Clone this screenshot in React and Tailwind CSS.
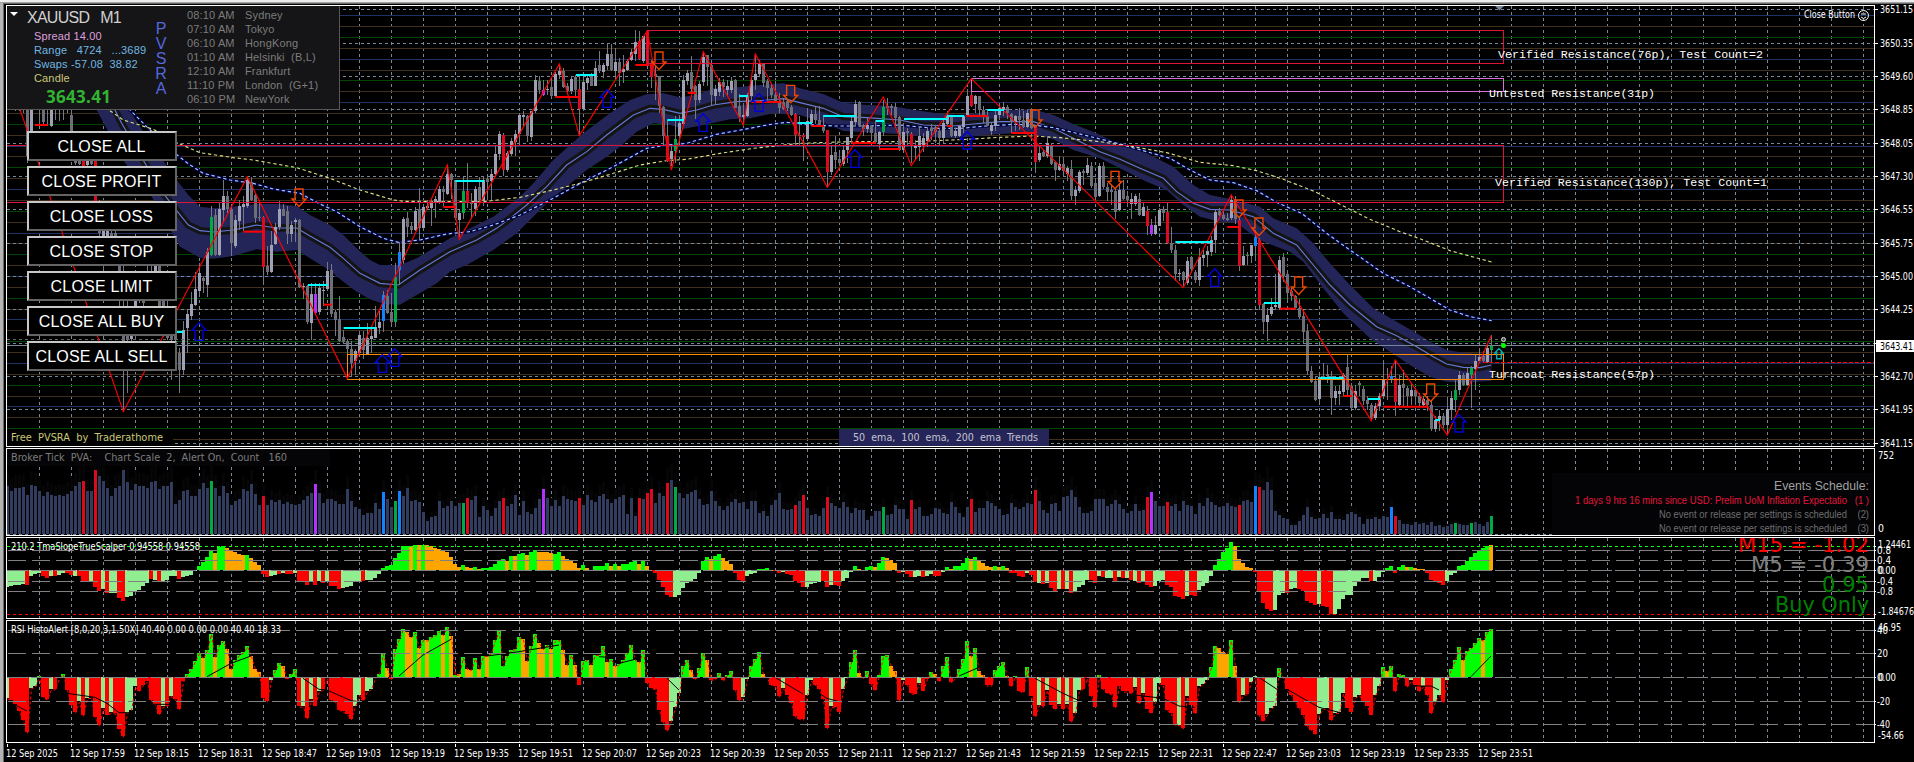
const UI_FONT = "[font-family:'DejaVu_Sans_Condensed','DejaVu_Sans',sans-serif]";
const ARIAL = "[font-family:'Liberation_Sans',Arial,sans-serif]";
const MONO = "[font-family:'Liberation_Mono',monospace]";

// one bar every 4px, first bar at x = 7
const barX = (i) => 7 + i * 4;

const GRID_X = Array.from({ length: 59 }, (_, k) => 7 + k * 32);
const PRICES = [
  [9, "3651.15"], [43, "3650.35"], [76, "3649.60"], [109, "3648.85"], [143, "3648.05"],
  [176, "3647.30"], [209, "3646.55"], [243, "3645.75"], [276, "3645.00"], [309, "3644.25"],
  [343, ""], [376, "3642.70"], [409, "3641.95"], [443, "3641.15"],
];
const PIVOTS = {
  "#1e3264": [15, 59, 102, 146, 189, 233, 276, 319, 363, 406],
  "#3f301e": [26, 48, 70, 91, 113, 135, 156, 178, 200, 222, 243, 265, 287, 309, 330, 352, 374, 396, 417, 439],
  "#004600": [37, 80, 124, 167, 211, 254, 298, 341, 385, 428],
};

const CANDLE_COLORS = {
  u: "#a0a0b4", d: "#6e6e78", g: "#00aa46", r: "#dc0a1e", b: "#1482ff", p: "#b432ff",
};

// "type high top bottom low", thirds of a pixel, starting at the bar index
const CANDLES = [
  [0, "d 200 220 300 330,d 210 240 310 330,d 220 260 320 335,u 230 260 310 335,d 240 290 330 340,d 300 320 470 490,u 280 300 420 425,d 300 310 320 330,d 300 310 328 375,d 300 320 368 380,d 300 320 328 380,u 290 310 378 382,d 300 310 320 360,d 300 310 320 365,d 300 310 320 360,d 300 310 320 340,d 300 345 400 470,d 400 420 490 495,d 450 470 494 495,r 440 450 510 512,u 450 460 495 500,d 450 470 493 495,r 480 485 612 640,d 600 620 700 780,u 650 660 740 812,u 660 690 712 770,d 690 700 710 790,d 690 700 720 770,d 760 780 900 920,d 800 1010 1028 1235,d 900 950 1022 1180,u 920 950 1018 1060,u 860 880 930 1020,d 860 870 900 910,d 880 900 910 920,u 780 790 800 900,u 760 770 780 860,u 750 790 830 890,d 770 790 940 1010,d 890 900 940 1012,d 900 930 1015 1020,d 960 990 1020 1140,d 980 1000 1022 1030"],
  [43, "d 1045 1060 1110 1180,u 965 992 1112 1125,u 930 943 984 1060,u 878 912 948 960,u 818 867 915 920,u 790 819 873 885,d 830 835 845 880,u 745 757 855 893,g 620 651 765 768,d 628 645 767 770,u 610 627 767 768,u 540 588 632 670,d 575 588 628 640,d 620 628 730 768,u 645 660 738 745,u 600 619 665 692,u 590 612 622 695,u 530 542 620 625,d 532 547 600 605,d 580 585 654 670,d 610 652 656 665,r 650 653 803 856,d 740 798 818 826,u 695 735 818 820,u 670 683 733 735,u 605 627 683 690,d 612 628 648 650,d 620 634 704 732,u 665 677 702 728,u 655 662 668 728,d 658 660 862 864,u 850 858 862 898,d 855 858 968 974,u 850 882 970 1022,p 850 882 940 945,u 850 864 936 945,u 845 870 875 918,u 788 815 868 872,d 792 812 944 952,d 930 938 960 1010,d 888 958 1025 1028,d 990 1012 1026 1032,d 1018 1025 1048 1135,d 1025 1047 1090 1132,u 1048 1053 1085 1125,u 998 1007 1060 1062,d 995 1015 1050 1078,u 970 1015 1063 1064,u 985 1010 1018 1060,u 918 982 1014 1015,u 935 967 985 1003,b 875 887 965 998,d 870 888 940 942,d 880 937 968 975,g 790 832 968 982,b 728 757 810 856,u 653 657 782 792"],
  [100, "d 636 655 682 712,d 668 678 692 704,u 622 633 692 695,d 565 628 684 720,u 612 622 684 690,u 600 620 625 632,u 595 608 625 680,u 590 598 608 655,u 558 567 607 612,d 560 568 578 618,u 495 522 582 585,d 520 522 540 598,d 540 542 655 660,u 630 640 660 712,g 532 574 640 658,r 490 573 610 625,d 580 608 614 658,u 560 567 627 650,d 532 562 600 610,u 530 540 605 620,d 528 538 546 600,u 508 523 545 600,u 438 462 522 530,u 393 402 462 482,r 400 405 510 530,u 455 460 510 518,u 415 423 462 470,u 390 402 428 470,u 340 347 402 435,u 333 345 352 378,d 345 348 410 428,u 335 335 412 425,u 225 242 335 340,d 228 243 270 283,p 240 270 287 290,u 240 268 272 287,d 240 262 290 292,u 218 223 290 292,u 192 213 225 238,d 205 213 262 265,d 250 260 275 282,u 230 237 273 282,d 225 232 272 290,r 228 269 328 405,u 232 247 328 335,u 225 235 250 270,d 220 226 258 260,u 185 204 258 260,d 155 197 214 220,u 190 197 218 235"],
  [150, "u 130 162 200 212,d 132 162 210 215,u 145 186 215 240,d 175 186 220 258,u 165 208 218 250,u 178 183 212 215,u 148 157 182 185,u 90 126 162 185,r 95 123 178 180,u 108 110 183 190,r 92 93 195 200,r 180 190 232 266,d 200 222 230 300,d 228 228 320 340,d 320 323 408 440,r 360 408 483 488,u 440 453 478 500,g 350 418 455 490,u 345 370 410 435,u 225 240 372 375,u 210 220 245 255,d 168 218 267 280,d 255 258 302 358,u 245 252 302 310,u 160 173 248 258,d 165 165 202 258,d 190 197 287 318,u 255 268 288 313,u 235 248 278 288,d 238 246 262 292,u 240 258 272 290,u 232 245 272 280,d 238 240 325 325,d 283 320 352 368,u 310 345 353 375,u 280 285 350 352,u 228 240 288 300,u 165 222 240 272,u 182 190 223 230,d 190 193 250 262,d 238 245 265 300,d 250 265 287 295,d 245 285 305 310,d 280 303 325 340,d 295 308 328 332,d 300 305 325 335,d 315 322 345 350,r 340 342 405 438,d 350 405 410 438,r 400 405 412 485"],
  [200, "u 325 365 417 420,u 330 342 370 375,d 318 343 362 372,d 320 360 375 378,d 345 380 395 400,r 390 392 518 560,u 435 467 517 525,d 408 458 480 508,d 460 478 490 498,u 440 452 492 500,u 412 413 452 490,u 345 363 415 432,u 302 312 367 378,d 303 307 378 382,d 372 375 388 408,u 355 375 387 400,d 375 378 400 425,d 362 400 428 430,u 395 397 432 450,g 300 322 398 410,d 295 318 325 345,d 312 318 325 347,d 310 323 355 385,d 350 353 452 455,u 370 398 452 455,d 385 395 400 440,r 398 402 440 490,u 420 440 445 480,u 378 410 443 485,u 400 415 435 457,u 385 393 425 442,d 372 385 395 420,d 375 382 398 430,d 385 395 415 435,u 358 370 415 430,u 335 348 372 375,d 350 350 410 412,u 385 395 410 415,u 375 380 410 413,u 345 350 383 400,u 268 288 345 350,r 240 287 320 322,u 285 288 312 340,d 288 288 332 348,d 318 332 348 370,d 335 348 378 380,u 370 375 393 405,u 335 345 378 395,u 310 325 345 362,u 308 322 330 348"],
  [250, "d 315 323 340 358,d 340 342 368 400,u 345 350 368 395,d 325 350 360 390,d 335 362 382 385,u 330 340 382 385,d 325 328 385 388,r 375 378 488 520,u 440 460 480 488,d 450 457 470 472,u 408 430 470 475,d 430 440 492 495,d 485 487 510 545,u 470 492 510 515,d 475 492 515 530,u 500 505 522 545,d 480 508 590 600,u 558 572 590 617,u 510 517 575 580,d 508 513 520 555,u 475 495 520 525,d 488 500 558 565,d 535 550 592 600,u 490 498 590 592,d 487 500 562 568,d 550 562 578 605,d 560 570 578 617,d 565 575 637 658,u 550 570 630 635,d 540 570 598 602,d 575 590 600 620,u 580 598 612 658,u 582 590 612 618,d 580 597 645 648,u 610 622 648 650,r 620 633 680 705,p 658 677 702 708,u 650 675 702 705,u 625 630 678 680,d 620 628 640 665,r 610 636 730 732,d 683 730 750 760,d 735 750 823 845,u 808 820 823 845,d 815 818 842 860,u 773 783 850 855,d 770 772 808 820,d 812 818 842 850,u 745 773 842 860,u 750 765 775 800"],
  [300, "u 740 755 765 802,u 710 720 758 770,u 632 638 722 760,d 625 635 645 650,d 635 645 658 662,d 640 655 662 665,u 585 600 655 662,d 590 605 658 672,r 655 660 798 815,u 740 768 797 800,d 758 767 770 795,u 735 735 770 790,b 690 713 738 780,r 715 722 915 930,d 910 912 968 1002,u 925 945 968 1025,u 895 922 943 950,u 822 917 923 932,u 770 780 925 930,d 760 772 828 848,d 810 822 880 905,d 865 875 890 905,d 885 888 925 930,d 898 925 952 958,d 930 950 997 1030,d 972 995 1115 1125,d 1100 1113 1146 1150,d 1130 1145 1200 1204,u 1120 1133 1198 1210,d 1090 1130 1136 1140,d 1095 1123 1130 1150,d 1115 1130 1196 1245,u 1160 1175 1196 1215,u 1155 1175 1182 1215,u 1120 1125 1178 1190,d 1062 1102 1170 1190,d 1150 1158 1224 1228,u 1155 1175 1224 1230,d 1145 1150 1155 1190,d 1160 1167 1205 1215,d 1190 1200 1212 1230,d 1210 1215 1255 1260,u 1210 1220 1255 1262,u 1180 1190 1220 1235,u 1080 1140 1190 1195,u 1105 1137 1140 1200,b 1100 1130 1138 1150,r 1085 1134 1208 1250,u 1125 1155 1215 1220,d 1110 1152 1165 1220"],
  [350, "d 1158 1165 1190 1220,u 1150 1172 1190 1215,d 1165 1170 1190 1215,d 1180 1190 1210 1220,u 1190 1198 1215 1218,d 1190 1200 1215 1235,d 1205 1215 1288 1295,u 1250 1260 1288 1298,u 1230 1250 1262 1295,d 1240 1250 1275 1285,u 1195 1228 1275 1300,u 1175 1195 1230 1260,g 1140 1170 1202 1238,u 1115 1125 1172 1185,d 1120 1125 1155 1160,u 1105 1120 1155 1160,g 1100 1105 1125 1225,u 1065 1085 1108 1170,u 1045 1072 1085 1087,d 1055 1070 1085 1090,u 1040 1045 1088 1090,g 1005 1035 1050 1090"],
].flatMap(([start, rows]) =>
  rows.split(",").map((row, k) => {
    const [type, ...values] = row.split(" ");
    return [start + k, type, ...values.map((v) => Math.floor(Number(v) / 3))];
  })
);

const ZIGZAG =
  "60,328 370,1235 742,530 1042,1135 1342,495 1378,718 1678,192 1738,407 1942,92 2014,510 2110,155 2230,375 2266,162 2482,562 2650,291 2734,497 2914,236 3550,863 3694,585 4114,1262 4186,1080 4342,1305 4474,1006";

const BAND_TOP =
  "290,200 350,270 440,410 530,540 565,585 600,620 640,625 700,620 770,612 830,612 890,618 930,645 990,675 1030,705 1070,745 1110,780 1140,795 1200,795 1250,775 1350,715 1400,690 1480,650 1560,590 1600,550 1660,480 1750,400 1830,340 1890,300 1940,283 1990,280 2040,292 2090,285 2140,265 2210,262 2280,255 2350,250 2400,265 2470,282 2530,308 2600,315 2680,318 2730,328 2800,338 2870,345 2930,340 2990,332 3100,328 3160,345 3220,372 3290,400 3340,425 3440,460 3520,500 3580,555 3630,585 3690,597 3780,620 3820,655 3890,685 3940,730 3990,790 4050,855 4120,925 4190,965 4250,1000 4290,1025 4340,1050 4390,1058 4474,1063";
const BAND_BOTTOM =
  "4474,1142 4390,1148 4340,1145 4290,1130 4230,1095 4170,1055 4110,1015 4030,940 3970,865 3910,785 3870,755 3790,725 3750,700 3710,668 3660,665 3600,650 3550,615 3500,570 3440,545 3360,505 3300,475 3220,450 3160,418 3100,402 3040,400 2960,405 2860,415 2780,410 2700,402 2620,398 2530,393 2470,368 2400,345 2320,340 2250,355 2190,358 2110,375 2050,387 2010,375 1960,370 1910,395 1860,440 1820,470 1760,510 1700,560 1650,600 1600,650 1550,700 1480,750 1400,795 1350,815 1310,850 1250,885 1200,914 1150,912 1110,898 1070,875 1030,845 990,812 930,775 890,750 830,755 770,748 700,768 640,776 600,773 540,740 455,590 375,488 290,330";
const BAND_MID =
  "340,320 365,370 435,490 490,580 530,632 565,675 600,692 640,696 700,690 770,675 830,684 890,684 930,708 990,742 1030,775 1080,820 1140,850 1195,855 1260,810 1350,755 1430,720 1490,685 1530,655 1580,615 1640,560 1700,495 1760,455 1820,405 1900,345 1950,325 1990,328 2040,340 2090,330 2140,315 2210,305 2280,302 2350,296 2400,308 2470,325 2530,350 2600,353 2700,360 2770,375 2860,378 2920,372 3000,365 3100,365 3160,385 3220,415 3300,455 3360,478 3420,505 3490,535 3530,575 3580,610 3630,628 3690,630 3760,650 3820,700 3890,735 3940,795 3990,855 4050,915 4130,980 4190,1007 4250,1040 4300,1070 4340,1092 4390,1102 4440,1103 4474,1095";
const EMA_BLUE =
  "385,325 440,380 535,468 570,495 610,520 690,540 760,550 820,567 900,580 960,612 1010,635 1080,680 1150,715 1195,727 1260,720 1340,702 1410,695 1480,675 1560,645 1650,600 1750,545 1840,500 1940,445 2000,435 2060,430 2150,403 2250,385 2300,375 2360,367 2400,372 2500,378 2600,378 2700,375 2800,385 2880,385 2960,378 3040,373 3100,375 3160,383 3260,407 3360,432 3440,455 3510,475 3570,510 3630,540 3700,548 3770,572 3830,607 3905,640 3980,700 4050,750 4150,820 4230,860 4290,895 4350,930 4410,950 4475,962";
const EMA_YELLOW =
  "330,332 370,360 460,388 535,430 600,458 700,473 760,480 890,503 990,535 1080,570 1180,600 1215,604 1450,605 1560,592 1660,570 1750,547 1840,520 1920,495 2000,482 2060,478 2160,460 2260,445 2400,430 2550,425 2730,425 2900,418 3000,412 3100,408 3180,413 3300,425 3400,440 3500,458 3600,487 3700,497 3770,512 3850,538 3945,575 4030,618 4110,658 4200,695 4270,720 4350,752 4420,771 4475,786";

const HIGHS = [
  [530, 550, 996], [924, 983, 855], [1031, 1127, 984], [1366, 1452, 543], [1728, 1788, 225], [2002, 2052, 360],
  [2218, 2244, 288], [2392, 2436, 369], [2470, 2567, 348], [2628, 2652, 363], [2712, 2842, 357], [2842, 2892, 348],
  [2962, 3012, 330], [3526, 3636, 726], [3792, 3840, 909], [3958, 4030, 1134], [4104, 4140, 1197], [4306, 4320, 1260],
];
const LOWS = [
  [105, 143, 375], [730, 790, 695], [970, 995, 914], [1330, 1368, 621], [1666, 1738, 291], [1906, 1948, 195],
  [2063, 2088, 279], [2254, 2340, 306], [2434, 2472, 378], [2555, 2628, 429], [2637, 2700, 447], [2842, 2856, 378],
  [2900, 2964, 348], [3034, 3105, 399], [3682, 3718, 681], [3840, 3888, 926], [4030, 4056, 1188], [4150, 4284, 1220],
];
const SELL_ARROWS = [
  [897, 565], [1977, 154], [2372, 254], [3105, 328], [3345, 512], [3717, 598], [3777, 652], [3896, 829], [4292, 1150],
];
const BUY_ARROWS = [
  [597, 967], [1147, 1063], [1184, 1045], [1821, 268], [2109, 340], [2277, 280], [2565, 448], [2902, 393], [3644, 805], [4377, 1242],
];

const parseBars = (text) =>
  text.trim().split(/\s+/).map((token) => {
    const type = /[a-z]/.test(token[0]) ? token[0] : "n";
    return [type, Number(token.replace(/[a-z]/, ""))];
  });

const VOLUME = parseBars(`
170 183 174 174 173 195 165 168 183 198 188 195 198 195 198 192 183 170 157 r153 183 183 r120 138 155 174 198 174 170 120
157 180 163 170 170 174 157 155 177 170 168 157 222 210 183 180 198 198 177 160 174 g153 174 200 170 190 225 213 207 177
183 163 192 225 r198 225 210 216 210 222 216 222 225 222 210 200 189 p162 189 219 207 207 213 222 222 177 213 231 237 255
249 249 219 237 b186 207 231 g213 b183 198 174 213 210 216 246 273 261 258 213 234 228 213 228 219 g219 r204 210 198 261 228
240 258 234 213 r204 228 222 195 255 213 246 252 234 207 p177 204 228 210 228 198 207 210 213 r204 225 195 210 216 198 192
207 219 207 201 195 252 204 260 r204 207 r189 r177 219 189 200 r159 150 g171 189 204 192 186 180 207 225 222 183 213 228 240
228 216 207 219 216 237 213 213 249 243 258 225 210 189 237 240 237 r225 213 r195 234 255 252 258 234 r201 219 228 234 216
231 249 234 240 240 270 258 243 243 g231 255 252 225 237 237 267 r210 237 231 258 258 252 234 237 249 252 216 231 249 261
231 r207 246 234 234 213 219 228 237 255 252 219 231 237 231 219 222 r180 213 240 249 222 219 243 201 198 180 201 231 249
249 243 207 207 207 228 222 210 222 237 249 243 222 243 240 r201 p186 213 228 228 r216 228 222 243 213 225 228 252 219 228
204 216 225 231 228 219 228 231 r225 213 210 216 b168 r171 180 156 180 243 255 264 267 285 285 273 255 231 261 267 264 252
264 246 267 267 270 252 246 252 261 282 267 267 261 267 258 261 b231 r258 270 282 282 285 276 282 279 285 276 288 285 291
288 282 g279 282 285 285 g279 276 282 288 276 g258`);

const SLOPE = parseBars(`
l473 l470 l467 l465 l462 r467 l440 l432 l430 r440 r446 l440 r440 l435 l430 r430 r435 l440 r440 r454 r454 l454 r472 r483 l478 r490 l490 l490 r505 r515
l503 l500 l488 l480 l470 l460 r448 l450 r458 l453 l450 l440 l440 r448 l443 l440 l437 l422 g408 g398 g381 g363 o371 g352 g348 o354 o365 o368 o372 o377
g375 o384 o398 o405 r432 r443 l438 l436 r434 l430 r432 r434 l430 r454 r454 r466 l455 r465 l455 r459 l455 r470 r470 r477 l474 l472 l470 l458 l455 r453
l452 l450 l445 l434 g415 g408 g405 g384 g369 g350 g348 o350 g346 o347 g346 o347 o350 o356 o359 o365 o368 o381 o403 o411 g405 o411 o415 g411 o418 g414
g414 g411 g402 g390 g387 o393 g378 o378 g372 g370 o376 g368 g360 o366 o366 o368 o371 g372 g366 o378 o387 o390 o400 o414 g405 o414 o420 g408 g408 g408
g400 o408 g403 o408 g402 g402 g398 g392 o403 g393 o408 r423 r430 r450 r472 r497 r503 l503 l497 l475 l460 l456 l448 l430 g393 g381 o387 g378 g372 o384
o394 o403 r430 r450 r455 l440 l433 l430 g417 g417 g414 o420 r425 r430 l428 r432 r435 r453 r460 r472 l472 l462 l461 l456 r454 r472 l465 r467 r470 l455
l444 l428 g408 o417 l422 g411 g409 o411 g399 g381 o384 o390 o400 r431 l428 r434 r443 l441 l438 r443 l438 l434 r438 r440 l428 g411 o417 g409 g408 g400
g384 o387 g381 o393 o400 o408 o411 g408 o411 g408 o414 r430 r430 r440 r443 l431 r436 r458 l459 r462 l460 r476 r484 l477 r477 l477 r490 l488 l472 l465
l450 r450 r461 l438 r443 l444 l444 r458 l443 r446 l444 r450 l455 r460 l455 r466 r472 l470 l455 l452 r467 r472 r500 r503 r509 l500 r497 r500 l480 l470
l461 l440 g405 g387 g366 g356 g337 o348 o387 o400 o411 o414 r426 r485 r521 r537 r543 l540 l495 l490 r490 l477 l475 r477 r485 r513 r520 r527 l522 r530
r533 r552 l552 l537 l508 l497 l495 l470 l453 l444 l444 r453 l453 l443 l428 g415 g408 r429 g411 g405 o411 g411 o415 o417 o417 r430 r452 r458 r461 r465
l455 l437 l431 g408 g405 g393 g381 g370 g362 g355 g348 o347`);

const RSI = parseBars(`
l805 r810 r823 r843 r872 r908 l775 l770 g738 r803 r808 l778 r778 l745 g733 r780 r825 r848 l815 r857 l805 r803 r862 r887 l835 r855 l848 r850 r898 r920
l850 l840 l770 r783 r765 r755 r812 r825 r853 l830 r828 l798 r808 r837 r755 g733 g718 g693 g670 o685 g660 g612 o683 g645 g633 o658 o717 g692 g675 g668
g650 o678 o717 o727 r805 r815 l752 g720 g700 o710 r748 g733 g718 r830 l830 r865 l808 r828 l783 r780 r745 r810 r815 r840 r845 r853 r867 l830 l795 r812
l785 l778 l745 g733 g672 o715 r747 g657 g627 g597 o608 o622 g608 o655 g630 o632 g622 g617 g605 o615 g592 o618 g735 o733 g683 o717 o720 g685 o718 g678
o678 g670 g630 g605 g708 g678 g660 g658 g622 o628 o693 g650 g613 o640 o657 g645 o657 g632 g630 o660 o705 g675 o705 r765 g695 g690 o705 g675 g675 g650
o697 g687 o710 g703 g690 g670 g645 g690 o697 g660 r760 r775 r777 r840 r878 r902 l873 l833 l790 g708 g690 o722 r747 g715 g670 o690 r750 r748 g730 r752
g735 g725 r780 r812 l803 l748 g708 g687 g668 o733 l745 r765 r770 r800 l775 r795 r820 r860 r867 r869 l795 l752 r765 r777 r808 r895 l830 r833 r848 l778
l745 g697 g660 o730 r745 g725 r763 r782 g735 g680 g677 o708 o725 r812 l752 r765 r790 r793 l760 r783 r747 g727 o733 r753 g708 g683 r757 r745 g718 g688
g635 o680 g655 o725 o735 r767 r767 g722 g708 g697 o738 r770 g738 r783 r787 g712 r800 r860 l825 r830 l780 r826 r837 l823 r837 l823 r875 l850 l780 r777
r745 r800 r832 g735 r778 r790 r792 r832 r768 r785 r785 r790 l772 r820 l790 r838 r850 l817 l760 r765 r840 r850 r885 l885 r895 l800 r825 r850 l770 l762
l750 g712 g648 o655 o668 o672 g632 o708 r817 l795 r793 l757 l740 r857 r875 l853 l835 l828 g715 r745 r778 r795 r815 r835 r855 r888 r900 r913 l853 l837
l835 r870 l850 l848 l790 r835 r848 l803 l795 r815 r828 r857 l797 l770 g712 o725 g708 r785 g733 g737 r770 l752 r765 r783 l770 r795 r850 l815 l795 r818
l752 g718 g690 g652 o690 g663 g655 g640 g625 o632 g607 g598`);

const RSI_SIGNAL = [
  [[2, 825], [5, 843]],
  [[15, 790], [22, 802], [25, 820], [28, 848], [31, 848]],
  [[36, 823], [42, 823]],
  [[50, 740], [56, 700], [61, 678]],
  [[74, 745], [78, 778], [80, 780], [86, 812], [88, 815]],
  [[98, 738], [104, 675], [111, 628]],
  [[120, 678], [128, 665], [138, 645]],
  [[148, 680], [152, 683]],
  [[153, 700], [157, 688]],
  [[165, 745], [168, 780]],
  [[192, 742], [199, 792]],
  [[203, 790], [205, 805], [208, 815]],
  [[238, 738], [243, 712]],
  [[257, 745], [264, 790], [268, 812]],
  [[282, 795], [289, 805], [293, 828], [297, 832]],
  [[313, 742], [318, 782]],
  [[320, 778], [328, 832], [333, 847]],
  [[352, 768], [356, 768], [358, 780]],
  [[366, 740], [371, 678]],
];

const VOLUME_COLORS = { n: "#323c5f", r: "#dc0a1e", g: "#00aa46", b: "#1482ff", p: "#b432ff" };
const HISTO_COLORS = { g: "#00ff00", o: "#ffa500", r: "#ff0000", l: "#90ee90" };

const TIMES = [
  "12 Sep 2025", "12 Sep 17:59", "12 Sep 18:15", "12 Sep 18:31", "12 Sep 18:47", "12 Sep 19:03", "12 Sep 19:19",
  "12 Sep 19:35", "12 Sep 19:51", "12 Sep 20:07", "12 Sep 20:23", "12 Sep 20:39", "12 Sep 20:55", "12 Sep 21:11",
  "12 Sep 21:27", "12 Sep 21:43", "12 Sep 21:59", "12 Sep 22:15", "12 Sep 22:31", "12 Sep 22:47", "12 Sep 23:03",
  "12 Sep 23:19", "12 Sep 23:35", "12 Sep 23:51",
];

const SESSIONS = [
  ["08:10 AM", "Sydney"], ["07:10 AM", "Tokyo"], ["06:10 AM", "HongKong"], ["01:10 AM", "Helsinki  (B,L)"],
  ["12:10 AM", "Frankfurt"], ["11:10 PM", "London  (G+1)"], ["06:10 PM", "NewYork"],
];

const CLOSE_ACTIONS = [
  "CLOSE ALL", "CLOSE PROFIT", "CLOSE LOSS", "CLOSE STOP", "CLOSE LIMIT", "CLOSE ALL BUY", "CLOSE ALL SELL",
];

const Label = ({ x, y, w, size = 11, fill = "#fff", font = UI_FONT, children }) => (
  <text
    x={x}
    y={y}
    textLength={w}
    lengthAdjust="spacingAndGlyphs"
    fontSize={size}
    fill={fill}
    className={`whitespace-pre ${font}`}
  >
    {children}
  </text>
);

const HLine = ({ y, x1 = 7, x2 = 1874, color, dash, width = 1 }) => (
  <line
    x1={x1}
    x2={x2}
    y1={y + 0.5}
    y2={y + 0.5}
    stroke={color}
    strokeWidth={width}
    strokeDasharray={dash}
    shapeRendering="crispEdges"
  />
);

const VerticalGrid = ({ top, bottom }) => (
  <g stroke="#778899" strokeDasharray="3 3" shapeRendering="crispEdges">
    {GRID_X.slice(1).map((x) => (
      <line key={x} x1={x + 0.5} x2={x + 0.5} y1={top} y2={bottom} />
    ))}
  </g>
);

// Chart area with its white frame, and the value scale right of it
const Panel = ({ top, height, scale, overlay, children }) => (
  <div className="flex">
    <div className="relative border border-white">
      <svg
        width="1867"
        height={height}
        viewBox={`7 ${top} 1867 ${height}`}
        className="block overflow-hidden"
      >
        {children}
      </svg>
      {overlay}
    </div>
    <svg
      width="39"
      height={height + 2}
      viewBox={`1875 ${top - 1} 39 ${height + 2}`}
      className="block overflow-visible"
    >
      {scale}
    </svg>
  </div>
);

const Histogram = ({ bars, zero, base }) => (
  <g shapeRendering="crispEdges">
    {bars.map(([type, value], i) => {
      const y = 430 + Math.floor(value / 3);
      const height = Math.max(1, Math.abs(y - zero));
      return (
        <rect
          key={i}
          x={barX(i) - (base ? 1 : 2)}
          y={Math.min(y, zero)}
          width={base ? 3 : 4}
          height={height}
          fill={base ? VOLUME_COLORS[type] : HISTO_COLORS[type]}
        />
      );
    })}
  </g>
);

const Arrow = ({ x, y, down, color, size = 1 }) => (
  <path
    d="M0 1.5 L21 24 L12 24 L12 54 L-12 54 L-12 24 L-21 24 Z"
    transform={down ? `translate(${x} ${y + 56}) scale(1 -1)` : `translate(${x} ${y}) scale(${size})`}
    fill="none"
    stroke={color}
    strokeWidth={4.2 / size}
  />
);

const InfoCard = () => (
  <div
    className={`absolute left-0 top-0 flex h-[104px] w-[333px] border-r border-b border-[#5c5555] bg-[#151517] ${ARIAL}`}
  >
    <div className="w-[140px] pl-[20px]">
      <div className="whitespace-pre pt-px text-[16px] leading-[22px] tracking-[-0.75px] text-[#d0d0d0]">{"XAUUSD   M1"}</div>
      <div className="whitespace-pre pl-[7px] text-[11px] leading-[14px] tracking-[0.15px]">
        <div className="text-[#dda0dd]">Spread 14.00</div>
        <div className="text-[#6fb5e0]">{"Range   4724   ...3689"}</div>
        <div className="text-[#6fb5e0]">{"Swaps -57.08  38.82"}</div>
        <div className="text-[#c8c878]">Candle</div>
      </div>
      <div className="pl-[19px] pt-px text-[17px] font-bold leading-[22px] tracking-[0.3px] text-[#32b432] [font-family:'Open_Sans',sans-serif]">
        3643.41
      </div>
    </div>
    <div className="w-[40px] pl-[8px] pt-[15px] text-center text-[16px] leading-[15px] text-[#5468dc]">
      {["P", "V", "S", "R", "A"].map((letter) => (
        <div key={letter} className="w-[12px]">{letter}</div>
      ))}
    </div>
    <div className="pt-[2px] text-[11px] leading-[14px] tracking-[0.15px] text-[#7c7c7c]">
      {SESSIONS.map(([time, city]) => (
        <div key={city} className="flex whitespace-pre">
          <span className="w-[58px]">{time}</span>
          <span>{city}</span>
        </div>
      ))}
    </div>
    <span className="absolute left-[3px] top-[6px] h-0 w-0 border-x-[4px] border-t-[4px] border-x-transparent border-t-white" />
  </div>
);

const CloseButtons = () => (
  <div className="absolute left-[20px] top-[125px] flex flex-col gap-[5px]">
    {CLOSE_ACTIONS.map((label) => (
      <button
        key={label}
        className={`h-[30px] w-[150px] border-2 border-t-[#c8c8c8] border-r-[#646464] border-b-[#646464] border-l-[#c8c8c8] bg-black pt-px pr-px text-[16px] leading-[26px] tracking-[0.2px] text-white ${ARIAL}`}
      >
        {label}
      </button>
    ))}
  </div>
);

const PriceChart = () => (
  <Panel
    top={6}
    height={440}
    overlay={
      <>
        <InfoCard />
        <CloseButtons />
      </>
    }
    scale={
      <>
        {PRICES.map(([y, label]) => (
          <g key={y}>
            <HLine y={y} x1={1875} x2={1878} color="#fff" />
            {label && <Label x={1880} y={y + 4} w={33}>{label}</Label>}
          </g>
        ))}
        <rect x="1876" y="340" width="38" height="12" fill="#fff" />
        <Label x={1880} y={350} w={33} fill="#000">3643.41</Label>
      </>
    }
  >
    <VerticalGrid top={6} bottom={446} />
    {Object.entries(PIVOTS).map(([color, ys]) => ys.map((y) => <HLine key={y} y={y} color={color} />))}
    {PRICES.map(([y]) => (
      <HLine key={y} y={y} color="#778899" dash="3 3" />
    ))}

    <g transform="scale(0.33333)" fill="none">
      <polygon points={`${BAND_TOP} ${BAND_BOTTOM}`} fill="#232559" />
      <polyline points={BAND_MID} stroke="#141414" strokeWidth="22" />
      <polyline points={BAND_MID} stroke="#6478dc" strokeWidth="3.4" />
      <polyline points={EMA_BLUE} stroke="#00003c" strokeWidth="9" />
      <polyline points={EMA_BLUE} stroke="#a0c8ff" strokeWidth="3.6" strokeDasharray="10 8" />
      <polyline points={EMA_YELLOW} stroke="#dcdc82" strokeWidth="3.4" strokeDasharray="10 8" />
    </g>

    <g shapeRendering="crispEdges">
      {CANDLES.map(([i, type, high, top, bottom, low]) => (
        <g key={i}>
          <rect x={barX(i)} y={high} width="1" height={Math.max(1, low - high)} fill="#787882" />
          <rect x={barX(i) - 1} y={top} width="3" height={Math.max(1, bottom - top)} fill={CANDLE_COLORS[type]} />
        </g>
      ))}
    </g>

    <g fill="none" strokeWidth="1" shapeRendering="crispEdges">
      <path d="M647.5 30.5H1503.5V63.5H647.5Z" stroke="#dc143c" />
      <path d="M6 145.5H1503.5V202.5H6" stroke="#dc143c" />
      <path d="M971.5 78.5H1503.5V91.5H971.5Z" stroke="#da70d6" />
      <path d="M347.5 354.5H1503.5V379.5H347.5Z" stroke="#ff8c00" />
    </g>
    <HLine y={339} x2={1500} color="#696969" dash="3 3" />
    <HLine y={345} color="#778899" />
    <HLine y={362} x1={1483} color="#ff0000" dash="4 2" />

    <g transform="scale(0.33333)" fill="none">
      <polyline points={ZIGZAG} stroke="#ff0000" strokeWidth="3.4" />
      {HIGHS.map(([x1, x2, y]) => (
        <line key={x1} x1={x1} x2={x2} y1={y} y2={y} stroke="#00ffff" strokeWidth="6" />
      ))}
      {LOWS.map(([x1, x2, y]) => (
        <line key={x1} x1={x1} x2={x2} y1={y} y2={y} stroke="#ff0000" strokeWidth="6" />
      ))}
      {SELL_ARROWS.map(([x, y]) => (
        <Arrow key={x} x={x} y={y} down color="#f04600" />
      ))}
      {BUY_ARROWS.map(([x, y]) => (
        <Arrow key={x} x={x} y={y} color="#0000dc" />
      ))}
      <Arrow x={4497} y={1045} color="#00b4b4" size={0.58} />
    </g>
    <circle cx="1503.5" cy="339.5" r="2" fill="#555" stroke="#ddd" />
    <circle cx="1503.5" cy="345.5" r="2.5" fill="#00ff00" />
    <path d="M1495 6H1504L1499.5 10.5Z" fill="#778899" />

    <Label x={1804} y={18} w={51}>Close Button</Label>
    <g fill="none" stroke="#fff">
      <circle cx="1863.5" cy="15.5" r="5" />
      <path d="M1861 17Q1863.5 20 1866 17M1862 13v2M1865 13v2" />
    </g>
    <Label x={1498} y={58} w={265} size={11.6} font={MONO}>Verified Resistance(76p), Test Count=2</Label>
    <Label x={1489} y={97} w={166} size={11.6} font={MONO}>Untested Resistance(31p)</Label>
    <Label x={1495} y={186} w={272} size={11.6} font={MONO}>Verified Resistance(130p), Test Count=1</Label>
    <Label x={1489} y={378} w={166} size={11.6} font={MONO}>Turncoat Resistance(57p)</Label>

    <rect x="7" y="431" width="166" height="15" fill="#020202" />
    <Label x={11} y={441} w={152} size={11} fill="#c8c878">{"Free  PVSRA  by  Traderathome"}</Label>
    <rect x="839" y="429" width="210" height="17" fill="#25255a" />
    <Label x={853} y={441} w={185} size={11} fill="#c3c3cd">{"50  ema,  100  ema,  200  ema  Trends"}</Label>
  </Panel>
);

const VolumeChart = () => (
  <Panel
    top={449}
    height={86}
    scale={
      <>
        <Label x={1878} y={459} w={16}>752</Label>
        <Label x={1878} y={532} w={6}>0</Label>
      </>
    }
  >
    <VerticalGrid top={449} bottom={535} />
    <HLine y={534} color="#778899" dash="3 3" />
    <g shapeRendering="crispEdges">
      {VOLUME.map(([, value], i) => {
        const height = (312 - value) * 0.43;
        return <rect key={i} x={barX(i) - 1} y={534 - height} width="3" height={height} fill="#060608" />;
      })}
    </g>
    <Histogram bars={VOLUME} zero={534} base />
    <rect x="7" y="449" width="323" height="17" fill="#050507" />
    <Label x={11} y={461} w={276} size={11} fill="#7d7d7d">
      {"Broker Tick  PVA:    Chart Scale  2,  Alert On,  Count   160"}
    </Label>
    <rect x="1552" y="473" width="322" height="62" fill="#040406" />
    <Label x={1774} y={490} w={95} size={12} fill="#a0a0a0" font={ARIAL}>Events Schedule:</Label>
    <Label x={1575} y={504} w={294} size={10} fill="#e6143c" font={ARIAL}>
      {"1 days 9 hrs 16 mins since USD: Prelim UoM Inflation Expectatio   (1 )"}
    </Label>
    <Label x={1659} y={518} w={210} size={10} fill="#6e6e6e" font={ARIAL}>
      {"No event or release per settings is scheduled    (2)"}
    </Label>
    <Label x={1659} y={532} w={210} size={10} fill="#6e6e6e" font={ARIAL}>
      {"No event or release per settings is scheduled    (3)"}
    </Label>
  </Panel>
);

const SlopeChart = () => (
  <Panel
    top={538}
    height={80}
    scale={
      <>
        <Label x={1878} y={548} w={33}>1.24461</Label>
        <Label x={1877} y={554} w={14}>0.8</Label>
        <Label x={1877} y={564} w={14}>0.4</Label>
        <Label x={1877} y={574} w={19}>0.00</Label>
        <Label x={1878} y={574} w={6}>0</Label>
        <Label x={1877} y={585} w={16}>-0.4</Label>
        <Label x={1877} y={595} w={16}>-0.8</Label>
        <Label x={1878} y={615} w={36}>-1.84676</Label>
        {[546, 550, 560, 570, 581, 591, 614].map((y) => (
          <HLine key={y} y={y} x1={1875} x2={1876} color="#fff" />
        ))}
      </>
    }
  >
    <VerticalGrid top={538} bottom={618} />
    <Histogram bars={SLOPE} zero={570} />
    <HLine y={570} color="#778899" dash="3 3" />
    {[550, 560, 570, 581, 591].map((y) => (
      <HLine key={y} y={y} x1={8} color="#808080" dash="18 6" />
    ))}
    <HLine y={546} color="#00ff00" dash="3 3" />
    <HLine y={614} color="#ff0000" dash="3 3" />
    <Label x={11} y={550} w={189}>210.2 TmaSlopeTrueScalper 0.94558 0.94558</Label>
    <Label x={1738} y={552} w={131} size={21} fill="#ff0000">M15 = -1.02</Label>
    <Label x={1751} y={572} w={118} size={21} fill="#808080">M5 = -0.39</Label>
    <Label x={1822} y={592} w={47} size={21} fill="#008000">0.95</Label>
    <Label x={1775} y={612} w={94} size={21} fill="#008000">Buy Only</Label>
  </Panel>
);

const RsiChart = () => (
  <Panel
    top={621}
    height={121}
    scale={
      <>
        <Label x={1877} y={634} w={11}>40</Label>
        <Label x={1878} y={631} w={23}>46.95</Label>
        <Label x={1877} y={657} w={11}>20</Label>
        <Label x={1877} y={681} w={19}>0.00</Label>
        <Label x={1878} y={681} w={6}>0</Label>
        <Label x={1877} y={705} w={13}>-20</Label>
        <Label x={1877} y={728} w={13}>-40</Label>
        <Label x={1878} y={739} w={26}>-54.66</Label>
        {[630, 653, 677, 701, 724].map((y) => (
          <HLine key={y} y={y} x1={1875} x2={1876} color="#fff" />
        ))}
      </>
    }
  >
    <VerticalGrid top={621} bottom={742} />
    <Histogram bars={RSI} zero={677} />
    <polyline
      points={RSI.map(([, value], i) => `${barX(i) + 0.5},${430.5 + value / 3}`).join(" ")}
      fill="none"
      stroke="#ff0000"
      strokeDasharray="3 2"
    />
    {RSI_SIGNAL.map((segment) => (
      <polyline
        key={segment[0][0]}
        points={segment.map(([i, value]) => `${barX(i)},${430 + value / 3}`).join(" ")}
        fill="none"
        stroke="#000"
      />
    ))}
    <HLine y={677} color="#778899" dash="3 3" />
    {[630, 653, 677, 701, 724].map((y) => (
      <HLine key={y} y={y} x1={8} color="#808080" dash="18 6" />
    ))}
    <Label x={11} y={633} w={270}>RSI HistoAlert [8,0,20,3,1.50X] 40.40 0.00 0.00 0.00 40.40 18.33</Label>
  </Panel>
);

const TimeAxis = () => (
  <svg width="1908" height="18" viewBox="6 743 1908 18" className="block overflow-visible">
    {TIMES.map((time, k) => (
      <g key={time}>
        <rect x={7 + k * 64} y="743" width="1" height="3" fill="#fff" />
        <Label x={6 + k * 64} y={756} w={k === 0 ? 52 : 55}>{time}</Label>
      </g>
    ))}
  </svg>
);

const App = () => (
  <div className="flex h-[762px] w-[1914px] flex-col overflow-hidden bg-black">
    <div className="h-[3px] shrink-0 border-b border-[#a0a0a0] bg-[#ececec]" />
    <div className="flex flex-1">
      <div className="w-[4px] shrink-0 border-r border-[#696969] bg-[#b4b4b4]" />
      <div className="flex flex-col gap-px border-t border-[#696969] pl-[2px] pt-px">
        <PriceChart />
        <VolumeChart />
        <SlopeChart />
        <RsiChart />
        <TimeAxis />
      </div>
    </div>
  </div>
);

export default App;
